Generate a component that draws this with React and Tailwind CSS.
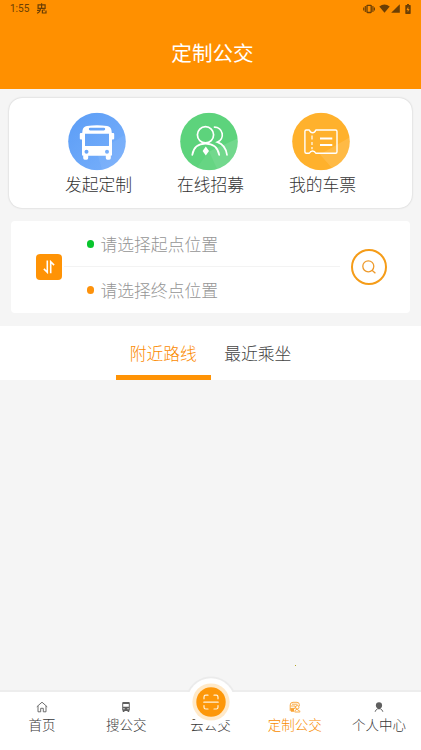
import { useState } from "react";

const services = [
  { label: "发起定制", icon: BusBadge },
  { label: "在线招募", icon: RecruitBadge },
  { label: "我的车票", icon: TicketBadge },
];

const tabs = ["附近路线", "最近乘坐"];

const navItems = [
  { label: "首页", icon: HomeIcon },
  { label: "搜公交", icon: BusIcon },
  { label: "云公交", icon: null },
  { label: "定制公交", icon: CustomIcon },
  { label: "个人中心", icon: UserIcon },
];

function BusBadge() {
  return (
    <svg viewBox="0 0 58 58" className="size-[58px]">
      <defs>
        <linearGradient id="blue" x1="0" y1="0" x2="1" y2="1">
          <stop offset="0" stopColor="#5b9df6" />
          <stop offset="1" stopColor="#79b0fb" />
        </linearGradient>
      </defs>
      <circle cx="29" cy="29" r="28.8" fill="url(#blue)" />
      <path d="M34 57.3 29 40 57 22A28.8 28.8 0 0 1 34 57.3Z" fill="#fff" opacity=".06" />
      <path
        fill="#fff"
        fillRule="evenodd"
        d="M19 13.5Q29 11.8 39 13.5 43 14.2 43.5 18L43.8 20.5H45.2Q46.2 20.5 46.2 21.5V26Q46.2 27 45 27H44V43H42.8V45.5Q42.8 47.2 41.3 47.2H39.3Q37.8 47.2 37.8 45.5V43.3H20.2V45.5Q20.2 47.2 18.7 47.2H16.7Q15.2 47.2 15.2 45.5V43H14V27H13Q11.8 27 11.8 26V21.5Q11.8 20.5 12.8 20.5H14.2L14.5 18Q15 14.2 19 13.5ZM22.2 15.2A1.3 1.3 0 0 0 22.2 18H35.8A1.3 1.3 0 0 0 35.8 15.2ZM17 21.2V33.5H41V21.2ZM18.5 37.2A2 2 0 1 0 18.5 41.2 2 2 0 1 0 18.5 37.2ZM39 37.2A2 2 0 1 0 39 41.2 2 2 0 1 0 39 37.2Z"
      />
    </svg>
  );
}

function RecruitBadge() {
  return (
    <svg viewBox="0 0 58 58" className="size-[58px]">
      <circle cx="29" cy="29" r="28.8" fill="#5dd37c" />
      <path d="M29 39 57.6 26A28.8 28.8 0 0 1 37 56.6Z" fill="#fff" opacity=".13" />
      <path d="M29 39 37 56.6A28.8 28.8 0 0 1 17 55Z" fill="#fff" opacity=".06" />
      <g fill="none" stroke="#fff" strokeWidth="1.7" strokeLinecap="round">
        <circle cx="25.5" cy="22.3" r="8.1" />
        <path d="M12.3 42.3C13.5 35 18.5 31.2 25.5 31.2S37.8 35 39.2 42.3" />
        <path d="M34.5 14.6A7.8 7.8 0 0 1 37.5 29.6C43 31.5 46 35.5 47 42.3" />
      </g>
      <path d="M25.8 34 29 38.5 25.8 43 22.6 38.5Z" fill="#fff" />
    </svg>
  );
}

function TicketBadge() {
  return (
    <svg viewBox="0 0 58 58" className="size-[58px]">
      <circle cx="29" cy="29" r="28.8" fill="#ffb12c" />
      <path d="M28 42 57.5 25A28.8 28.8 0 0 1 40 55.6Z" fill="#fff" opacity=".12" />
      <g fill="none" stroke="#fff" strokeWidth="1.4" strokeLinejoin="round">
        <path d="M14.3 17.5H17.3Q18.5 20.3 20.6 20.3T23.8 17.5H43.5Q45 17.5 45 19V39.3Q45 40.8 43.5 40.8H23.8Q22.7 38.5 20.6 38.5T17.3 40.8H14.3Q12.9 40.8 12.9 39.3V19Q12.9 17.5 14.3 17.5Z" />
        <path d="M20 23V27M20 29.5V32.5M20 34.5V36.8" strokeWidth="1.2" />
        <path d="M28 26H40.3M28 32.5H40.3" strokeWidth="1.8" />
      </g>
    </svg>
  );
}

function HomeIcon() {
  return (
    <svg viewBox="0 0 12 12" className="size-3" fill="none" stroke="currentColor" strokeWidth=".9">
      <path d="M.8 5.8 6 1.2 11.2 5.8M2 5V10.8H4.7V7.3H7.3V10.8H10V5" />
    </svg>
  );
}

function BusIcon() {
  return (
    <svg viewBox="0 0 12 12" className="size-3" fill="currentColor">
      <path
        fillRule="evenodd"
        d="M3.2 1H8.8Q9.8 1 9.8 2V9.6H9.2V11H7.6V9.9H4.4V11H2.8V9.6H2.2V2Q2.2 1 3.2 1ZM3.2 3V5.8H8.8V3ZM3.3 7.3V8.3H4.6V7.3ZM7.4 7.3V8.3H8.7V7.3Z"
      />
    </svg>
  );
}

function CustomIcon() {
  return (
    <svg viewBox="0 0 12 12" className="size-3" fill="none" stroke="currentColor" strokeWidth=".9">
      <path d="M1.2 9.8V4Q1.2 1.3 4 1.3H8Q10.2 1.3 10.3 3.5V5" />
      <path d="M3 3.2H8.6M1.4 5H6.2V7.4H1.4" />
      <path d="M1.2 7.5H5V10.8H2Z" fill="currentColor" stroke="none" />
      <circle cx="8.3" cy="6.2" r="1.7" />
      <path d="M5.7 10.7Q6 8.5 8 8.3L11.2 10.5Q11 11 10 11H5.7" />
    </svg>
  );
}

function UserIcon() {
  return (
    <svg viewBox="0 0 12 12" className="size-3" fill="currentColor">
      <circle cx="6" cy="4.4" r="3.1" />
      <path d="M4.4 6.5H7.6L7 8.2H5Z" />
      <path d="M2.1 10.8Q2.5 8.7 4.7 7.8M9.9 10.8Q9.5 8.7 7.3 7.8" fill="none" stroke="currentColor" strokeWidth=".9" />
    </svg>
  );
}

function StatusBar() {
  return (
    <div className="flex h-[17px] items-center justify-between pr-[9px] pl-[10px] text-[#6b3f05]">
      <div className="flex items-center gap-[7px]">
        <span className="font-[Roboto] text-[10px] leading-none font-normal">1:55</span>
        <svg viewBox="0 0 11 11" className="size-[11px]" fill="none" stroke="currentColor" strokeWidth="1.2">
          <path d="M5.6 .2V5.4M2.1 1.9H9.1V5.4H2.1ZM4.4 5.4Q4.4 9 1 10.2M1 7.4H4.2M6.4 7V10H10V7.6M6.4 7H9" />
        </svg>
      </div>
      <div className="flex items-center">
        <svg viewBox="0 0 12 10" className="h-[10px] w-3" fill="none" stroke="currentColor">
          <rect x="4" y="1.3" width="4.2" height="7.2" rx=".5" strokeWidth="1.3" />
          <path d="M2.3 2V8M9.9 2V8M.7 3.6V6.4M11.4 3.6V6.4" strokeWidth="1.1" />
        </svg>
        <svg viewBox="0 0 11 9" className="ml-[4px] h-[9px] w-[11px]" fill="currentColor">
          <path d="M.3 2.4Q5.5-1.6 10.7 2.4L5.5 8.8Z" />
        </svg>
        <svg viewBox="0 0 9 9" className="ml-px size-[9px]" fill="currentColor">
          <path d="M8.8.2V8.8H.2Z" />
        </svg>
        <svg viewBox="0 0 6 10" className="mr-px ml-[5px] h-[10px] w-[6px]" fill="currentColor">
          <path fillRule="evenodd" d="M2 0H4V1H5.1Q5.7 1 5.7 1.6V9.3Q5.7 9.9 5.1 9.9H.9Q.3 9.9.3 9.3V1.6Q.3 1 .9 1H2ZM3.3 2.6 1.5 5.9H2.7V8.3L4.5 5H3.3Z" />
        </svg>
      </div>
    </div>
  );
}

function PlaceField({ dotClass, placeholder }) {
  return (
    <div className="flex h-[46px] items-center pl-[24.5px]">
      <span className={`size-[7.5px] rounded-full ${dotClass}`} />
      <span className="mt-px ml-[6.5px] text-[16.8px] text-[#959595]">{placeholder}</span>
    </div>
  );
}

function RouteSearch() {
  return (
    <section className="mx-[11px] mt-[13px] flex h-[92px] items-center rounded-[4px] bg-white">
      <button className="ml-[24.5px] flex size-[26.5px] shrink-0 items-center justify-center rounded-[4px] bg-[#ff9305]">
        <svg viewBox="0 0 14 14" className="size-[14px]" fill="none" stroke="#fff" strokeWidth="1.6">
          <path d="M5.3.5V12.3L1.9 8.9M8.7 13.3V1.7L12.1 5.1" />
        </svg>
      </button>
      <div className="relative w-[278px]">
        <PlaceField dotClass="bg-[#08c52d]" placeholder="请选择起点位置" />
        <PlaceField dotClass="bg-[#fd920c]" placeholder="请选择终点位置" />
        <div className="absolute top-[45px] right-0 left-[2px] h-px bg-[#f3f3f3]" />
      </div>
      <button className="ml-[11px] flex size-[35.5px] items-center justify-center rounded-full border-2 border-[#f59c18]">
        <svg viewBox="0 0 14 14" className="size-[14px]" fill="none" stroke="#ee9a2b" strokeWidth="1.3">
          <circle cx="6.3" cy="6.3" r="5.5" />
          <path d="M10 10.2 13.4 13.2" />
        </svg>
      </button>
    </section>
  );
}

function BottomNav() {
  return (
    <nav className="relative flex h-[60px] border-t-2 border-[#ededed] bg-white">
      {navItems.map(({ label, icon: Icon }, i) => (
        <div
          key={label}
          className={`flex flex-1 flex-col items-center pt-[9px] ${i === 3 ? "text-[#f98c00]" : "text-[#383838]"}`}
        >
          <div className="h-3 opacity-80">{Icon && <Icon />}</div>
          <span className="mt-px text-[13.5px] leading-[20px] whitespace-nowrap">{label}</span>
        </div>
      ))}
      {/* raised scan button, overlaps the middle label */}
      <svg viewBox="0 0 56 56" className="absolute -top-[18.5px] left-[182.5px] size-14">
        <path d="M4.5 18A25.5 25.5 0 0 1 51.5 18" fill="#ebebeb" />
        <circle cx="28" cy="28" r="23.8" fill="#fff" />
        <circle cx="28" cy="28" r="18.6" fill="#ffe9c8" />
        <circle cx="28" cy="28" r="14.7" fill="#fd9709" />
        <g fill="none" stroke="#fff3dc" strokeWidth="1.2" strokeLinecap="round">
          <path d="M21 24.8V23Q21 21.2 22.8 21.2H25M31 21.2H33.2Q35 21.2 35 23V24.8M35 31.5V33.2Q35 35 33.2 35H31M25 35H22.8Q21 35 21 33.2V31.5" />
          <path d="M20.8 28.2H35.2" />
        </g>
      </svg>
    </nav>
  );
}

function App() {
  const [activeTab, setActiveTab] = useState(0);

  return (
    <div className="flex h-[750px] w-[421px] flex-col overflow-hidden bg-[#f5f5f5] font-['Noto_Sans_CJK_SC',sans-serif] font-light">
      <header className="h-[89px] bg-[#ff9000]">
        <StatusBar />
        <h1 className="mt-[20px] pl-[4px] text-center text-[20.6px] leading-[30px] font-normal text-white">
          定制公交
        </h1>
      </header>

      <section className="mx-[9px] mt-[9px] flex h-[110px] justify-center rounded-[13px] bg-white pt-[14px] shadow-[0_0_2px_rgba(0,0,0,0.22)]">
        {services.map(({ label, icon: Icon }) => (
          <div key={label} className="flex w-[112px] flex-col items-center">
            <div className="mr-[4px] translate-y-[0.5px]">
              <Icon />
            </div>
            <span className="mt-[2px] text-[16.8px] leading-[25px] text-[#333]">{label}</span>
          </div>
        ))}
      </section>

      <RouteSearch />

      <div className="mt-[13px] flex h-[54px] justify-center bg-white">
        {tabs.map((tab, i) => (
          <button
            key={tab}
            onClick={() => setActiveTab(i)}
            className={`w-[94.5px] border-b-[5px] pt-[7px] text-[16.8px] ${
              i === activeTab ? "border-[#ff9305] text-[#fb8a00]" : "border-transparent text-[#444]"
            }`}
          >
            {tab}
          </button>
        ))}
      </div>

      <main className="flex flex-1 items-end">
        <span className="mb-[24px] ml-[295px] size-px bg-[#b5a526]" />
      </main>

      <BottomNav />
    </div>
  );
}

export default App;
